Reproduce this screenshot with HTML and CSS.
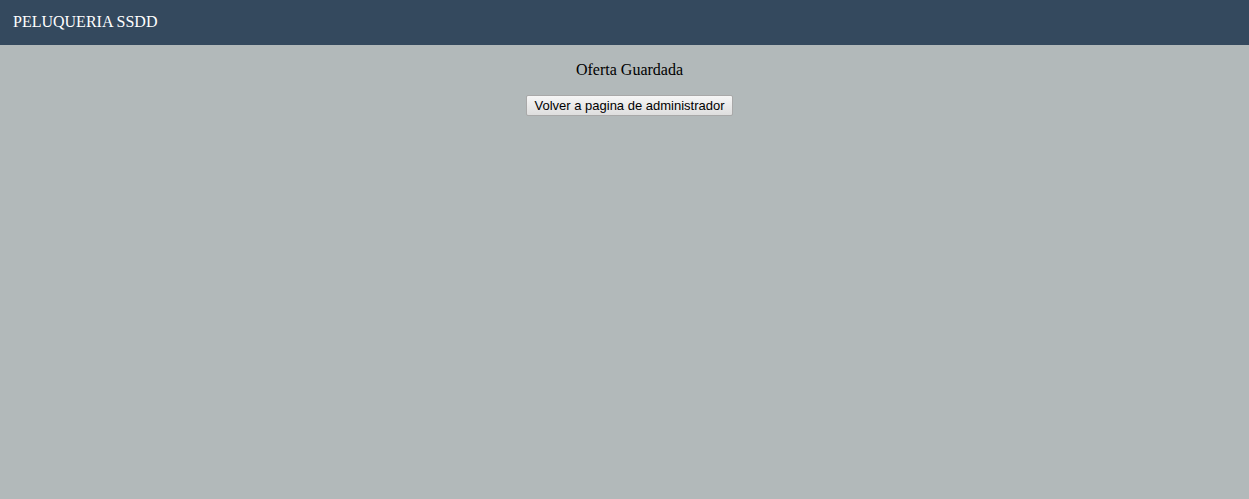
FILE: index.html
```html
<!DOCTYPE html>
<html>
<head>
<meta charset="utf-8">
<link rel="stylesheet" href="styles.css">
</head>
<body>
<header class="topbar">PELUQUERIA SSDD</header>
<main class="content">
  <p class="message">Oferta Guardada</p>
  <button class="back-btn" type="button">Volver a pagina de administrador</button>
</main>
</body>
</html>
```
FILE: styles.css
```css
html, body {
  margin: 0;
  padding: 0;
  height: 100%;
}
body {
  background: #b2b9ba;
  font-family: "Liberation Serif", "Times New Roman", serif;
  font-size: 16px;
  color: #000;
}
.topbar {
  height: 45px;
  box-sizing: border-box;
  background: #34495e;
  color: #fff;
  padding: 13px 13px 0;
  font-size: 16px;
  line-height: 18px;
}
.content {
  display: flex;
  flex-direction: column;
  align-items: center;
  padding-left: 10px;
}
.message {
  margin: 16px 0 0;
  line-height: 18px;
}
.back-btn {
  margin-top: 16px;
  height: 21px;
  padding: 0 7px;
  font-family: "Liberation Sans", Arial, sans-serif;
  font-size: 13px;
  color: #000;
  border: 1px solid #a9a9a9;
  border-radius: 2px;
  background: linear-gradient(#f6f6f6, #dedede);
}
```
